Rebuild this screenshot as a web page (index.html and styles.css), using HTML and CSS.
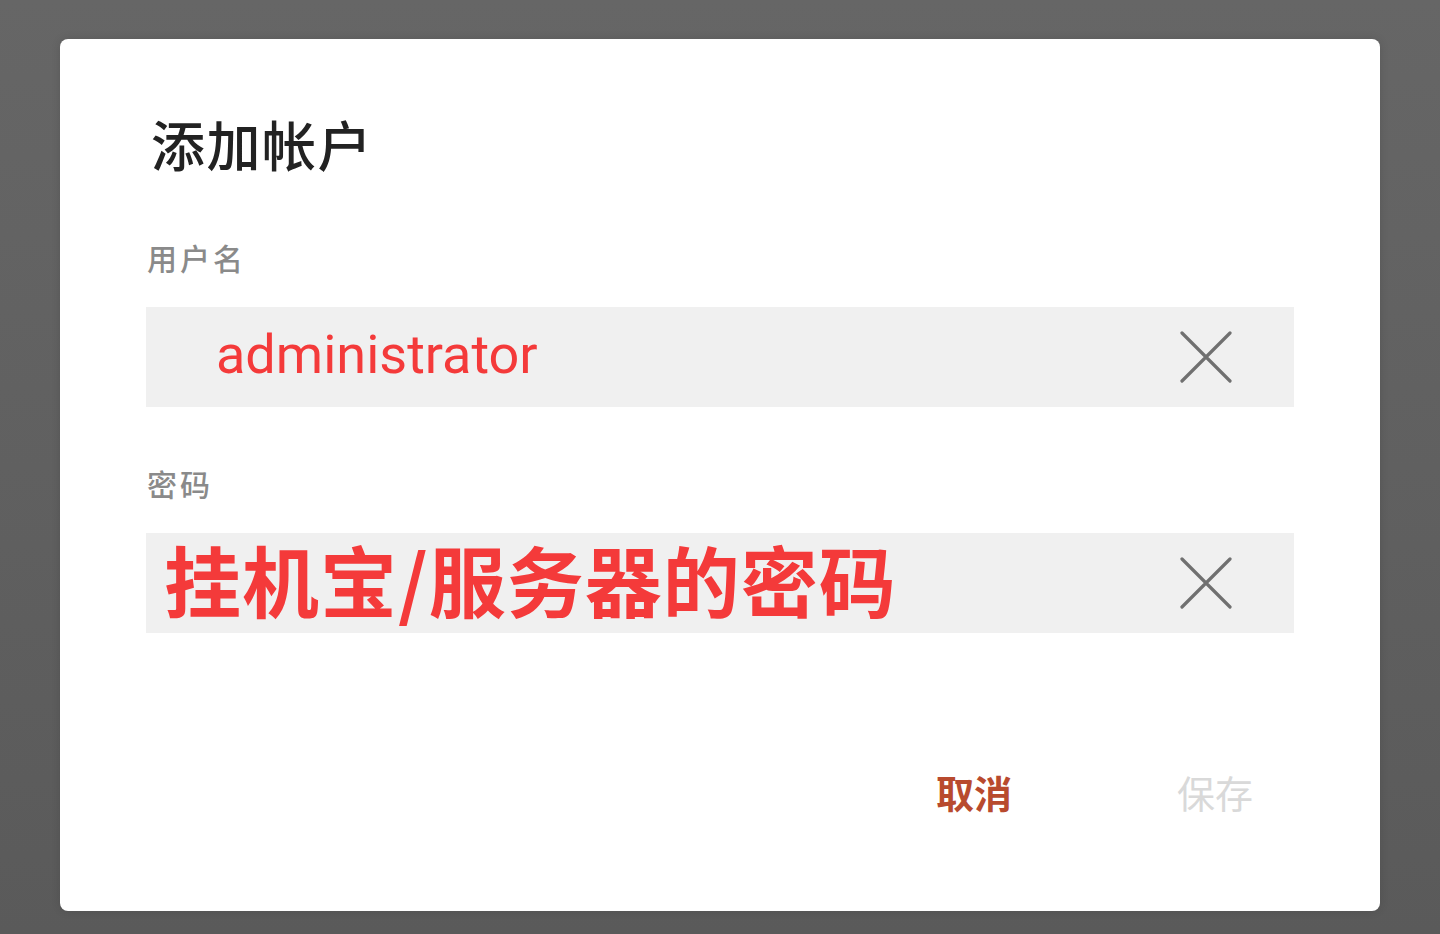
FILE: index.html
```html
<!DOCTYPE html>
<html lang="zh-CN">
<head>
<meta charset="utf-8">
<title>添加帐户</title>
<link rel="stylesheet" href="styles.css">
</head>
<body>
<div class="screen">
  <div class="dialog">
    <h1 class="title">添加帐户</h1>
    <div class="field">
      <label class="label">用户名</label>
      <div class="input">
        <span class="value value-user">administrator</span>
        <button class="clear" aria-label="清除">
          <svg width="52" height="52" viewBox="0 0 52 52"><path d="M2 2 L50 50 M50 2 L2 50" stroke="#707070" stroke-width="3.2" stroke-linecap="round" fill="none"/></svg>
        </button>
      </div>
    </div>
    <div class="field field-second">
      <label class="label">密码</label>
      <div class="input">
        <span class="value value-pass">挂机宝/服务器的密码</span>
        <button class="clear" aria-label="清除">
          <svg width="52" height="52" viewBox="0 0 52 52"><path d="M2 2 L50 50 M50 2 L2 50" stroke="#707070" stroke-width="3.2" stroke-linecap="round" fill="none"/></svg>
        </button>
      </div>
    </div>
    <div class="actions">
      <button class="btn btn-cancel">取消</button>
      <button class="btn btn-save">保存</button>
    </div>
  </div>
</div>
</body>
</html>
```

FILE: styles.css
```css
html, body {
  margin: 0;
  padding: 0;
}
body {
  background: linear-gradient(#666666, #5a5a5a);
  font-family: "Noto Sans CJK SC", "Noto Sans", sans-serif;
}
.screen {
  width: 1440px;
  height: 934px;
  padding: 39px 60px 23px;
  box-sizing: border-box;
}
.dialog {
  background: #ffffff;
  border-radius: 8px;
  height: 872px;
  box-sizing: border-box;
  padding: 75px 86px 92px;
  display: flex;
  flex-direction: column;
  box-shadow: 0 0 10px rgba(0, 0, 0, 0.12);
}
.title {
  margin: 0;
  padding-left: 5px;
  font-size: 54px;
  line-height: 60px;
  font-weight: 500;
  color: #222222;
  letter-spacing: 1.5px;
}
.field {
  margin-top: 63px;
  display: flex;
  flex-direction: column;
}
.field-second {
  margin-top: 56px;
}
.label {
  display: block;
  padding-left: 1px;
  font-size: 30px;
  line-height: 40px;
  color: #8a8a8a;
  letter-spacing: 3px;
  font-weight: 500;
}
.input {
  margin-top: 30px;
  height: 100px;
  background: #f0f0f0;
  display: flex;
  align-items: center;
  justify-content: space-between;
  padding-right: 62px;
}
.value {
  color: #f43a3a;
  white-space: nowrap;
}
.value-user {
  font-family: Roboto, "Noto Sans", sans-serif;
  font-size: 54px;
  padding-left: 70px;
  padding-bottom: 6px;
}
.value-pass {
  font-family: "Noto Sans CJK SC", sans-serif;
  font-size: 77px;
  font-weight: 700;
  padding-left: 18px;
  padding-bottom: 8px;
  line-height: 92px;
  letter-spacing: 1px;
}
.clear {
  border: 0;
  background: none;
  padding: 0;
  width: 52px;
  height: 52px;
  display: block;
}
.clear svg {
  display: block;
}
.actions {
  margin-top: auto;
  display: flex;
  justify-content: flex-end;
  gap: 85px;
  margin-right: 1px;
  padding-bottom: 3px;
}
.btn {
  border: 0;
  background: none;
  padding: 0 40px;
  font-family: "Noto Sans CJK SC", sans-serif;
  font-size: 38px;
  line-height: 48px;
}
.btn-cancel {
  color: #b84a2e;
  font-weight: 700;
}
.btn-save {
  color: #d9d9d9;
  font-weight: 400;
}
```
